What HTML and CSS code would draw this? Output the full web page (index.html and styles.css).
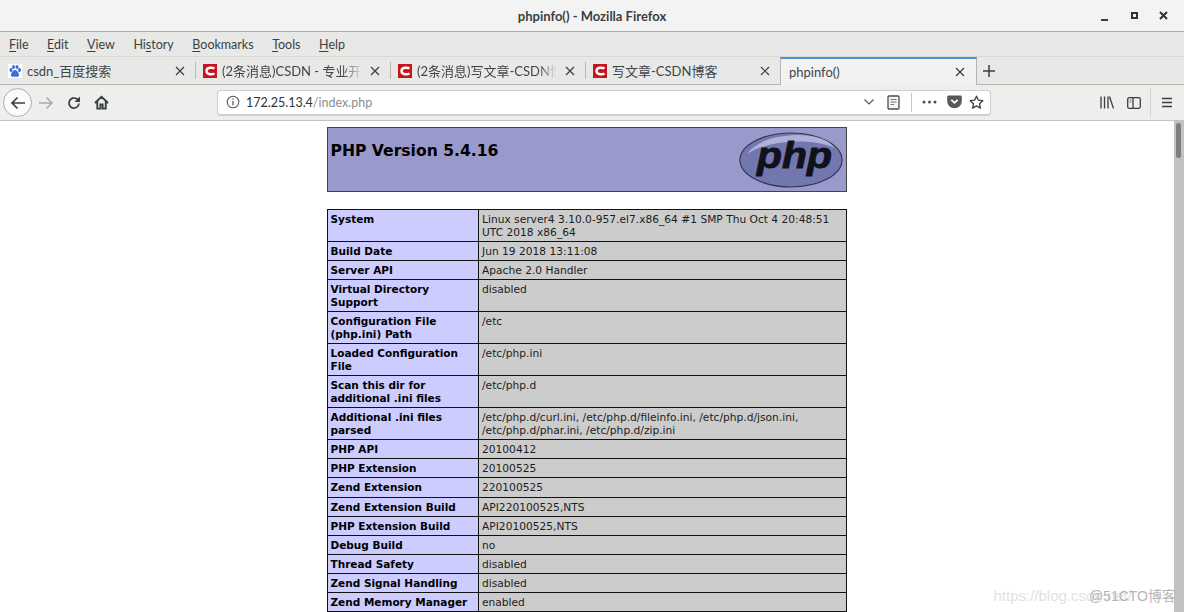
FILE: index.html
```html
<!DOCTYPE html>
<html lang="en">
<head>
<meta charset="utf-8">
<title>phpinfo() - Mozilla Firefox</title>
<link rel="stylesheet" href="styles.css">
</head>
<body>
<div class="window">
  <header class="titlebar">
    <span class="title">phpinfo() - Mozilla Firefox</span>
    <div class="wm">
      <svg class="wm-i" width="12" height="12" viewBox="0 0 12 12"><path d="M1 10h7" stroke="#3a3f42" stroke-width="2"/></svg>
      <svg class="wm-i" width="12" height="12" viewBox="0 0 12 12"><rect x="3" y="3" width="5" height="5" fill="none" stroke="#2e3436" stroke-width="2"/></svg>
      <svg class="wm-i" width="12" height="12" viewBox="0 0 12 12"><path d="M2 2l7 7M9 2l-7 7" stroke="#2e3436" stroke-width="2"/></svg>
    </div>
  </header>
  <nav class="menubar">
    <span class="menu"><u>F</u>ile</span>
    <span class="menu"><u>E</u>dit</span>
    <span class="menu"><u>V</u>iew</span>
    <span class="menu">Hi<u>s</u>tory</span>
    <span class="menu"><u>B</u>ookmarks</span>
    <span class="menu"><u>T</u>ools</span>
    <span class="menu"><u>H</u>elp</span>
  </nav>
  <div class="tabbar">
    <div class="tab">
      <svg class="fav" width="14" height="14" viewBox="0 0 14 14"><rect width="14" height="14" fill="#fff"/><g fill="#3b6fd8"><ellipse cx="3" cy="6" rx="1.5" ry="2"/><ellipse cx="5.5" cy="3" rx="1.5" ry="2"/><ellipse cx="9" cy="3" rx="1.5" ry="2"/><ellipse cx="11.5" cy="6" rx="1.5" ry="2"/><path d="M7 6c2 0 4 3 4 5 0 2-2 2-4 1.500-2 .5-4 .5-4-1.500 0-2 2-5 4-5z"/></g></svg>
      <span class="tab-label">csdn_百度搜索</span>
      <svg class="close" width="10" height="10" viewBox="0 0 10 10"><path d="M1 1l8 8M9 1l-8 8" stroke="#3a3f42" stroke-width="1.200"/></svg>
    </div>
    <div class="tab">
      <svg class="fav" width="14" height="14" viewBox="0 0 14 14"><rect width="14" height="14" fill="#c8141e"/><path d="M11.500 4.500C9.500 3.300 3.500 3 3.500 7s6 3.700 8 2.500" fill="none" stroke="#fff" stroke-width="2.400"/></svg>
      <span class="tab-label fade">(2条消息)CSDN - 专业开发者社区</span>
      <svg class="close" width="10" height="10" viewBox="0 0 10 10"><path d="M1 1l8 8M9 1l-8 8" stroke="#3a3f42" stroke-width="1.200"/></svg>
    </div>
    <div class="tab">
      <svg class="fav" width="14" height="14" viewBox="0 0 14 14"><rect width="14" height="14" fill="#c8141e"/><path d="M11.500 4.500C9.500 3.300 3.500 3 3.500 7s6 3.700 8 2.500" fill="none" stroke="#fff" stroke-width="2.400"/></svg>
      <span class="tab-label fade">(2条消息)写文章-CSDN博客</span>
      <svg class="close" width="10" height="10" viewBox="0 0 10 10"><path d="M1 1l8 8M9 1l-8 8" stroke="#3a3f42" stroke-width="1.200"/></svg>
    </div>
    <div class="tab">
      <svg class="fav" width="14" height="14" viewBox="0 0 14 14"><rect width="14" height="14" fill="#c8141e"/><path d="M11.500 4.500C9.500 3.300 3.500 3 3.500 7s6 3.700 8 2.500" fill="none" stroke="#fff" stroke-width="2.400"/></svg>
      <span class="tab-label">写文章-CSDN博客</span>
      <svg class="close" width="10" height="10" viewBox="0 0 10 10"><path d="M1 1l8 8M9 1l-8 8" stroke="#3a3f42" stroke-width="1.200"/></svg>
    </div>
    <div class="tab tab-active">
      <span class="tab-label">phpinfo()</span>
      <svg class="close" width="10" height="10" viewBox="0 0 10 10"><path d="M1 1l8 8M9 1l-8 8" stroke="#3a3f42" stroke-width="1.200"/></svg>
    </div>
    <svg class="newtab" width="14" height="14" viewBox="0 0 14 14"><path d="M7 1v12M1 7h12" stroke="#3a3f42" stroke-width="1.500"/></svg>
  </div>
  <div class="toolbar">
    <div class="back">
      <svg width="16" height="14" viewBox="0 0 16 14"><path d="M15 7H2M7.500 1.500L2 7l5.500 5.500" fill="none" stroke="#3a3f42" stroke-width="1.700"/></svg>
    </div>
    <svg class="tool-i forward" width="16" height="14" viewBox="0 0 16 14"><path d="M1 7h13M8.500 1.500L14 7l-5.500 5.500" fill="none" stroke="#a9abab" stroke-width="1.500"/></svg>
    <svg class="tool-i reload" width="14" height="14" viewBox="0 0 14 14"><path d="M12 7.500A5 5 0 1 1 10 3l2 1.500" fill="none" stroke="#3a3f42" stroke-width="1.700"/><path d="M13 0.500V6H7.500z" fill="#3a3f42"/></svg>
    <svg class="tool-i home" width="15" height="15" viewBox="0 0 16 16"><path d="M1 8.500L8 2l7 6.500M3.500 7v7.500h3.300V10h2.400v4.500h3.300V7" fill="none" stroke="#3a3f42" stroke-width="2"/></svg>
    <div class="urlbar">
      <svg class="info" width="14" height="14" viewBox="0 0 14 14"><circle cx="7" cy="7" r="5.800" fill="none" stroke="#55595b" stroke-width="1.100"/><path d="M7 6v4.300M7 3.500v1.300" stroke="#55595b" stroke-width="1.300"/></svg>
      <span class="url"><span class="host">172.25.13.4</span>/index.php</span>
      <svg class="chev" width="12" height="8" viewBox="0 0 12 8"><path d="M1.500 1.500L6 6l4.500-4.500" fill="none" stroke="#55595b" stroke-width="1.200"/></svg>
      <svg class="reader" width="13" height="15" viewBox="0 0 13 15"><rect x="1" y="1" width="11" height="13" rx="1" fill="#f4f4f4" stroke="#4a4f52" stroke-width="1.300"/><path d="M3.500 4.500h6M3.500 7h6M3.500 9.500h3.500" stroke="#77797b" stroke-width="1.100"/></svg>
      <span class="url-sep"></span>
      <svg class="dots" width="15" height="4" viewBox="0 0 15 4"><circle cx="2" cy="2" r="1.500" fill="#4a4f52"/><circle cx="7.500" cy="2" r="1.500" fill="#4a4f52"/><circle cx="13" cy="2" r="1.500" fill="#4a4f52"/></svg>
      <svg class="pocket" width="15" height="14" viewBox="0 0 15 14"><path d="M1.500 0.500h12a1.300 1.300 0 0 1 1.300 1.300V6A7.300 7.300 0 0 1 .2 6V1.800A1.300 1.300 0 0 1 1.500 .5z" fill="#55595b"/><path d="M4.300 4.800l3.200 3 3.200-3" fill="none" stroke="#fff" stroke-width="1.800"/></svg>
      <svg class="star" width="15" height="15" viewBox="0 0 15 15"><path d="M7.500 1.200l1.900 4 4.400.5-3.300 3 .9 4.400-3.900-2.200-3.900 2.200.9-4.400-3.300-3 4.400-.5z" fill="none" stroke="#3a3f42" stroke-width="1.300" stroke-linejoin="round"/></svg>
    </div>
    <div class="tool-right">
      <svg width="14" height="13" viewBox="0 0 14 13"><path d="M1 .5v12M4.500 .5v12M8 .5v12M9.500 .5l4 12" stroke="#3a3f42" stroke-width="1.300" fill="none"/></svg>
      <svg width="14" height="12" viewBox="0 0 14 12"><rect x=".7" y=".7" width="12.600" height="10.600" rx="1.500" fill="none" stroke="#3a3f42" stroke-width="1.300"/><path d="M6 1v10" stroke="#3a3f42" stroke-width="1.300"/><path d="M2.500 3h2M2.500 5h2" stroke="#77797b"/></svg>
      <span class="tool-sep"></span>
      <svg width="12" height="11" viewBox="0 0 12 11"><path d="M1 1.500h10M1 5.500h10M1 9.500h10" stroke="#3a3f42" stroke-width="1.400"/></svg>
    </div>
  </div>
  <main class="viewport">
    <div class="page">
      <div class="php-head">
        <h1 class="php-title">PHP Version 5.4.16</h1>
        <svg class="php-logo" width="104" height="56" viewBox="0 0 104 56">
          <ellipse cx="52" cy="28" rx="51" ry="27" fill="#7377b0" stroke="#34364e" stroke-width="1.200"/>
          <path d="M8 22C18 8 40 3 60 3c16 0 30 5 36 13C78 7 32 6 8 22z" fill="#aeb2d8"/>
          <text x="18" y="36" textLength="75" lengthAdjust="spacingAndGlyphs" class="php-logo-text">php</text>
        </svg>
      </div>
      <table class="info-table">
        <tr><th>System</th><td>Linux server4 3.10.0-957.el7.x86_64 #1 SMP Thu Oct 4 20:48:51 UTC 2018 x86_64</td></tr>
        <tr><th>Build Date</th><td>Jun 19 2018 13:11:08</td></tr>
        <tr><th>Server API</th><td>Apache 2.0 Handler</td></tr>
        <tr><th>Virtual Directory Support</th><td>disabled</td></tr>
        <tr><th>Configuration File (php.ini) Path</th><td>/etc</td></tr>
        <tr><th>Loaded Configuration File</th><td>/etc/php.ini</td></tr>
        <tr><th>Scan this dir for additional .ini files</th><td>/etc/php.d</td></tr>
        <tr><th>Additional .ini files parsed</th><td>/etc/php.d/curl.ini, /etc/php.d/fileinfo.ini, /etc/php.d/json.ini, /etc/php.d/phar.ini, /etc/php.d/zip.ini</td></tr>
        <tr><th>PHP API</th><td>20100412</td></tr>
        <tr><th>PHP Extension</th><td>20100525</td></tr>
        <tr class="row-tall"><th>Zend Extension</th><td>220100525</td></tr>
        <tr><th>Zend Extension Build</th><td>API220100525,NTS</td></tr>
        <tr><th>PHP Extension Build</th><td>API20100525,NTS</td></tr>
        <tr><th>Debug Build</th><td>no</td></tr>
        <tr><th>Thread Safety</th><td>disabled</td></tr>
        <tr><th>Zend Signal Handling</th><td>disabled</td></tr>
        <tr><th>Zend Memory Manager</th><td>enabled</td></tr>
      </table>
    </div>
    <div class="scrollbar"><div class="thumb"></div></div>
    <div class="watermark"><span class="wm-csdn">https://blog.csdn.net/</span><span class="wm-cto">@51CTO博客</span></div>
  </main>
</div>
</body>
</html>
```
FILE: styles.css
```css
* { box-sizing: border-box; }
html, body { margin: 0; height: 100%; overflow: hidden; background: #fff; }
body { font-family: Lato, "Noto Sans CJK SC", sans-serif; }
.window { display: flex; flex-direction: column; height: 612px; width: 1184px; }

.titlebar { height: 32px; flex: none; background: #f3f3f3; border-bottom: 1px solid #aeaea8; display: flex; align-items: center; justify-content: center; position: relative; }
.title { font-size: 13px; font-weight: 700; color: #3a3f42; }
.wm { position: absolute; right: 0; top: 0; height: 31px; display: flex; align-items: center; gap: 17px; padding-right: 14px; }
.wm-i { display: block; }

.menubar { height: 24px; flex: none; background: #e8e8e7; display: flex; align-items: center; padding-left: 9px; gap: 18.500px; font-size: 12.500px; color: #3a3f42; }
.menu u { text-underline-offset: 2px; }

.tabbar { height: 29px; flex: none; background: #e8e8e7; border-top: 1px solid #d8d8d6; border-bottom: 1px solid #b4b4b0; display: flex; align-items: stretch; }
.tab { width: 195px; display: flex; align-items: center; padding: 0 10px 0 8px; font-size: 13px; color: #3f4447; position: relative; }
.tab + .tab::before { content: ""; position: absolute; left: 0; top: 5px; bottom: 5px; width: 1px; background: #b8b8b4; }
.tab-active { width: 197px; background: #f2f2f1; margin-bottom: -1px; border-top: 2px solid #4a90d9; border-right: 1px solid #b4b4b0; border-left: 1px solid #b4b4b0; padding-left: 8px; padding-right: 11px; }
.tab-active::before { display: none; }
.fav { flex: none; margin-right: 5px; }
.tab-label { flex: 1; white-space: nowrap; overflow: hidden; }
.fade { -webkit-mask-image: linear-gradient(90deg, #000 86%, transparent 100%); mask-image: linear-gradient(90deg, #000 86%, transparent 100%); margin-right: 8px; }
.close { flex: none; }
.newtab { align-self: center; margin-left: 5px; }

.toolbar { height: 36px; flex: none; background: #eeeeed; border-bottom: 1px solid #c4c4c2; display: flex; align-items: center; padding-left: 3px; }
.back { width: 29px; height: 29px; border-radius: 50%; background: #fbfbfb; border: 1px solid #aeaeab; display: flex; align-items: center; justify-content: center; flex: none; }
.tool-i { flex: none; }
.forward { margin-left: 6px; }
.reload { margin-left: 13px; }
.home { margin-left: 13px; }
.urlbar { width: 774px; height: 26px; flex: none; margin-left: 108px; background: #fff; border: 1px solid #cfcfcd; border-bottom-width: 2px; border-radius: 4px; display: flex; align-items: center; padding-left: 8px; font-size: 12.500px; }
.info { flex: none; }
.url { flex: 1; margin-left: 6px; color: #8b8e90; white-space: nowrap; }
.host { color: #2e3436; }
.chev { flex: none; margin-right: 12px; }
.reader { flex: none; margin-right: 11px; }
.url-sep { width: 1px; height: 19px; background: #c4c4c2; flex: none; margin-right: 10px; }
.dots { flex: none; margin-right: 10px; }
.pocket { flex: none; margin-right: 7px; }
.star { flex: none; margin-right: 6px; }
.tool-right { flex: 1; display: flex; align-items: center; justify-content: flex-end; gap: 13px; padding-right: 11px; }
.tool-sep { width: 1px; height: 29px; background: #d4d4d2; margin: 0 -3px 0 -4px; }

.viewport { flex: 1; min-height: 0; display: flex; position: relative; overflow: hidden; background: #fff; font-family: "DejaVu Sans", sans-serif; color: #000; }
.page { flex: 1; min-width: 0; padding: 6px 0 0 327px; }
.php-head { width: 520px; height: 65px; background: #9999cc; border: 1px solid #444; display: flex; justify-content: space-between; align-items: flex-start; padding: 4px 3px 0 2.500px; margin-bottom: 17px; }
.php-title { margin: 9px 0 0; font-size: 15.600px; font-weight: bold; line-height: 20px; }
.php-logo { flex: none; margin-top: 0; }
.php-logo-text { font-family: "Liberation Sans", sans-serif; font-style: italic; font-weight: bold; font-size: 36px; fill: #11111a; stroke: #11111a; stroke-width: .9px; }

.info-table { width: 520px; border-collapse: collapse; table-layout: fixed; font-size: 10.667px; line-height: 13px; }
.info-table th, .info-table td { border: 1px solid #111; padding: 3px 3px 2px; text-align: left; vertical-align: top; }
.info-table th { width: 151px; background: #ccccff; font-size: 10.500px; font-weight: bold; padding-left: 2.500px; }
.info-table td { background: #cccccc; color: #1c1c1c; }
.row-tall th, .row-tall td { padding-bottom: 3px; }

.scrollbar { width: 10px; flex: none; background: #c2c2c0; padding: 2px 3px 0 2px; }
.thumb { height: 35px; background: #7c7f80; border-radius: 3px; }

.watermark { position: absolute; right: 8px; bottom: 7px; font-family: "Liberation Sans", "Noto Sans CJK SC", sans-serif; font-size: 15px; white-space: nowrap; display: flex; align-items: baseline; }
.wm-csdn { color: #e2e2e2; margin-right: -43px; }
.wm-cto { color: #b4b4b4; font-size: 14px; }
```
